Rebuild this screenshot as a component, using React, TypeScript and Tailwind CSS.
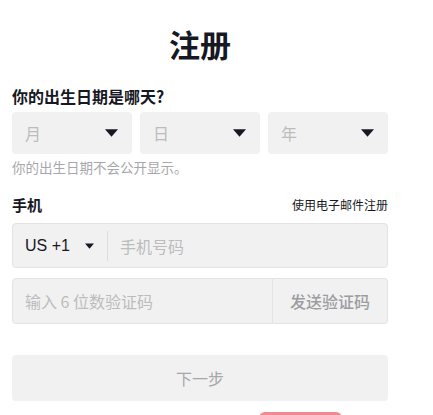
import React from 'react';

const Caret: React.FC<{ className?: string }> = ({ className }) => (
  <svg viewBox="0 0 12 7" className={className} fill="currentColor">
    <path d="M0 0h12L6 7z" />
  </svg>
);

const DateSelect: React.FC<{ label: string }> = ({ label }) => (
  <div className="flex-1 h-[42px] rounded-[4px] bg-[#f1f1f2] flex items-center justify-between pl-[13px] pr-[14px]">
    <span className="text-[16px] text-[#bcbcbc]">{label}</span>
    <Caret className="w-[13px] h-[8px] text-[#161823]" />
  </div>
);

export default function App() {
  return (
    <div className="min-h-screen bg-white overflow-hidden font-['Noto_Sans_CJK_SC','Liberation_Sans',sans-serif]">
      <div className="w-[376px] ml-[12px]">
        <h1 className="mt-[24px] text-center text-[31px] leading-[40px] font-bold text-[#161823]">注册</h1>

        <div className="mt-[22px] text-[16px] leading-[20px] font-bold text-[#161823]">你的出生日期是哪天?</div>
        <div className="mt-[6px] flex gap-[8px]">
          <DateSelect label="月" />
          <DateSelect label="日" />
          <DateSelect label="年" />
        </div>
        <div className="mt-[5px] text-[13.5px] leading-[16px] text-[#a7a7ab]">你的出生日期不会公开显示。</div>

        <div className="mt-[20px] flex items-center justify-between leading-[20px]">
          <span className="text-[15px] font-bold text-[#161823]">手机</span>
          <span className="text-[12px] text-[#161823]">使用电子邮件注册</span>
        </div>

        <div className="mt-[8px] h-[45px] rounded-[4px] border border-[#e3e3e4] bg-[#f1f1f2] flex items-center">
          <div className="flex items-center pl-[12px] pr-[13px] gap-[15px]">
            <span className="text-[16px] text-[#161823] font-['Liberation_Sans',sans-serif]">US +1</span>
            <Caret className="w-[9px] h-[6px] text-[#161823]" />
          </div>
          <div className="w-px h-[30px] bg-[#dcdcdd]" />
          <span className="pl-[12px] text-[16px] text-[#bcbcbc]">手机号码</span>
        </div>

        <div className="mt-[10px] h-[46px] flex">
          <div className="flex-1 rounded-l-[4px] border border-[#e3e3e4] bg-[#f1f1f2] flex items-center pl-[12px]">
            <span className="text-[16px] text-[#bcbcbc]">输入 6 位数验证码</span>
          </div>
          <div className="w-[115px] rounded-r-[4px] border border-l-0 border-[#e3e3e4] bg-[#f1f1f2] flex items-center justify-center">
            <span className="text-[16px] text-[#9d9da1] font-medium">发送验证码</span>
          </div>
        </div>

        <div className="mt-[31px] h-[46px] rounded-[4px] bg-[#f1f1f2] flex items-center justify-center">
          <span className="text-[16px] text-[#a7a7ab]">下一步</span>
        </div>

        <div className="mt-[11px] ml-[247px] w-[83px] h-[12px] rounded-[6px] bg-[#f08a8f]" />
      </div>
    </div>
  );
}
